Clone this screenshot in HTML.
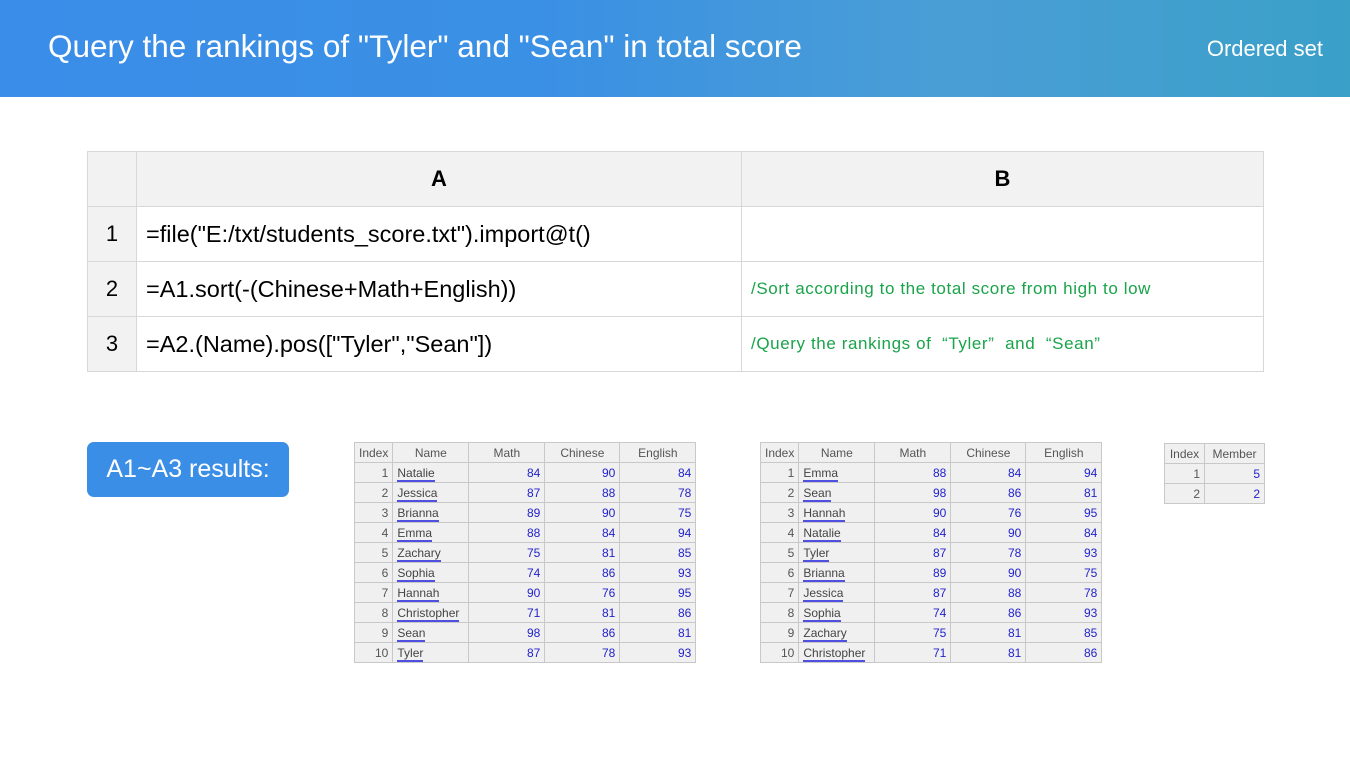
<!DOCTYPE html><html><head><style>
body{margin:0;width:1350px;height:759px;position:relative;background:#fff;font-family:"Liberation Sans",sans-serif;overflow:hidden}
.hd{position:absolute;left:0;top:0;width:1350px;height:97px;background:linear-gradient(90deg,#3a8de8 0%,#3a90e4 40%,#4a9ed6 70%,#3aa0c8 100%)}
.hd .t{position:absolute;left:48px;top:28px;color:#fff;font-size:31.5px}
.hd .r{position:absolute;right:27px;top:36px;color:#fff;font-size:22px}
table.m{position:absolute;left:87px;top:151px;border-collapse:collapse;font-size:23.5px;color:#000}
table.m td{border:1px solid #d8d8d8;height:54px;padding:0}
table.m tr:first-child td{background:#f2f2f2;font-weight:bold;text-align:center;font-size:22px}
table.m td.n{background:#f2f2f2;text-align:center;width:48px;font-size:22px}
table.m td.a{padding-left:9px;width:595px}
table.m td.b{padding-left:9px;width:512px;color:#1aa34a;font-size:17px;letter-spacing:0.6px}
.btn{position:absolute;left:87px;top:442px;width:202px;height:55px;background:#3a8ee6;border-radius:7px;color:#fff;font-size:25px;line-height:55px;text-align:center}
table.s{position:absolute;border-collapse:collapse;font-size:12px;background:#f0f0f0;font-family:"Liberation Sans",sans-serif}
table.s td{border:1px solid #c8c8c8;height:19px;padding:0 4px;text-align:right;color:#2222cc}
table.s tr:first-child td{text-align:center;color:#555}
table.s td:first-child{color:#555}
table.s td.nm{text-align:left;color:#444}
table.s td.nm span{border-bottom:2px solid #5050e0}
</style></head><body>
<div class="hd"><div class="t">Query the rankings of "Tyler" and "Sean" in total score</div><div class="r">Ordered set</div></div>
<table class="m">
<tr><td class="n"></td><td style="width:604px">A</td><td style="width:521px">B</td></tr>
<tr><td class="n">1</td><td class="a">=file("E:/txt/students_score.txt").import@t()</td><td class="b"></td></tr>
<tr><td class="n">2</td><td class="a">=A1.sort(-(Chinese+Math+English))</td><td class="b">/Sort according to the total score from high to low</td></tr>
<tr><td class="n">3</td><td class="a">=A2.(Name).pos(["Tyler","Sean"])</td><td class="b">/Query the rankings of &nbsp;“Tyler” &nbsp;and &nbsp;“Sean”</td></tr>
</table>
<div class="btn">A1~A3 results:</div>
<table class="s" style="left:354px;top:442px">
<tr><td style="width:29px">Index</td><td style="width:67px">Name</td><td style="width:67px">Math</td><td style="width:66px">Chinese</td><td style="width:67px">English</td></tr>
<tr><td>1</td><td class="nm"><span>Natalie</span></td><td>84</td><td>90</td><td>84</td></tr>
<tr><td>2</td><td class="nm"><span>Jessica</span></td><td>87</td><td>88</td><td>78</td></tr>
<tr><td>3</td><td class="nm"><span>Brianna</span></td><td>89</td><td>90</td><td>75</td></tr>
<tr><td>4</td><td class="nm"><span>Emma</span></td><td>88</td><td>84</td><td>94</td></tr>
<tr><td>5</td><td class="nm"><span>Zachary</span></td><td>75</td><td>81</td><td>85</td></tr>
<tr><td>6</td><td class="nm"><span>Sophia</span></td><td>74</td><td>86</td><td>93</td></tr>
<tr><td>7</td><td class="nm"><span>Hannah</span></td><td>90</td><td>76</td><td>95</td></tr>
<tr><td>8</td><td class="nm"><span>Christopher</span></td><td>71</td><td>81</td><td>86</td></tr>
<tr><td>9</td><td class="nm"><span>Sean</span></td><td>98</td><td>86</td><td>81</td></tr>
<tr><td>10</td><td class="nm"><span>Tyler</span></td><td>87</td><td>78</td><td>93</td></tr>
</table>
<table class="s" style="left:760px;top:442px">
<tr><td style="width:29px">Index</td><td style="width:67px">Name</td><td style="width:67px">Math</td><td style="width:66px">Chinese</td><td style="width:67px">English</td></tr>
<tr><td>1</td><td class="nm"><span>Emma</span></td><td>88</td><td>84</td><td>94</td></tr>
<tr><td>2</td><td class="nm"><span>Sean</span></td><td>98</td><td>86</td><td>81</td></tr>
<tr><td>3</td><td class="nm"><span>Hannah</span></td><td>90</td><td>76</td><td>95</td></tr>
<tr><td>4</td><td class="nm"><span>Natalie</span></td><td>84</td><td>90</td><td>84</td></tr>
<tr><td>5</td><td class="nm"><span>Tyler</span></td><td>87</td><td>78</td><td>93</td></tr>
<tr><td>6</td><td class="nm"><span>Brianna</span></td><td>89</td><td>90</td><td>75</td></tr>
<tr><td>7</td><td class="nm"><span>Jessica</span></td><td>87</td><td>88</td><td>78</td></tr>
<tr><td>8</td><td class="nm"><span>Sophia</span></td><td>74</td><td>86</td><td>93</td></tr>
<tr><td>9</td><td class="nm"><span>Zachary</span></td><td>75</td><td>81</td><td>85</td></tr>
<tr><td>10</td><td class="nm"><span>Christopher</span></td><td>71</td><td>81</td><td>86</td></tr>
</table>
<table class="s" style="left:1164px;top:443px">
<tr><td style="width:31px">Index</td><td style="width:51px">Member</td></tr>
<tr><td>1</td><td>5</td></tr>
<tr><td>2</td><td>2</td></tr>
</table>
</body></html>
